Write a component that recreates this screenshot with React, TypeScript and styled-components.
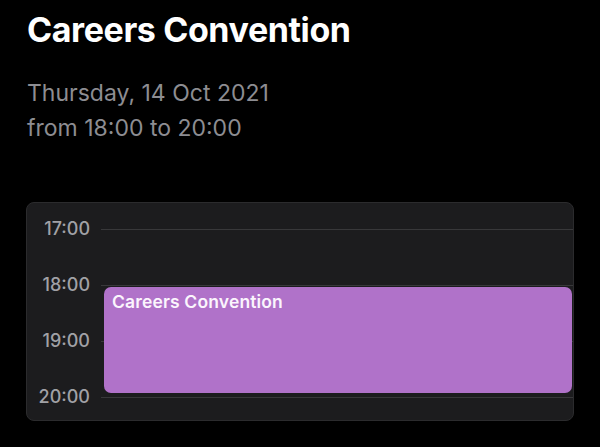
import styled, { createGlobalStyle } from "styled-components";

const GlobalStyle = createGlobalStyle`
  html, body {
    margin: 0;
    padding: 0;
    background: #000;
  }
  body {
    font-family: Inter, "Liberation Sans", Arial, sans-serif;
    -webkit-font-smoothing: antialiased;
  }
`;

const Page = styled.div`
  width: 600px;
  height: 447px;
  overflow: hidden;
  background: #000;
  padding: 10px 26px 0 26px;
  box-sizing: border-box;
`;

const Title = styled.h1`
  margin: 0 0 0 1px;
  font-size: 34px;
  line-height: 40px;
  font-weight: 700;
  color: #fff;
  letter-spacing: -0.4px;
`;

const Details = styled.div`
  margin: 26px 0 0 1px;
  color: #8d8d92;
  font-size: 23px;
  line-height: 35px;
`;

const Card = styled.div`
  margin-top: 56px;
  position: relative;
  background: #1c1c1e;
  border: 1px solid #2b2b2d;
  border-radius: 8px;
  padding: 16px 0 13px 0;
`;

const Hours = styled.div`
  display: flex;
  flex-direction: column;
`;

const HourRow = styled.div`
  display: flex;
  height: 56px;
  &:last-child {
    height: 20px;
  }
`;

const HourLabel = styled.div`
  width: 63px;
  flex: none;
  text-align: right;
  font-size: 18px;
  line-height: 20px;
  font-weight: 500;
  color: #a1a1a6;
`;

const HourLine = styled.div`
  flex: 1;
  margin-left: 11px;
  height: 10px;
  border-bottom: 1px solid #38383a;
`;

const EventBlock = styled.div<{ $top: number; $height: number }>`
  position: absolute;
  left: 77px;
  right: 1px;
  top: ${(p) => p.$top}px;
  height: ${(p) => p.$height}px;
  background: #b072c9;
  border-radius: 7px;
  padding: 4px 8px;
  box-sizing: border-box;
  color: #fbf5fd;
  font-size: 17.5px;
  line-height: 22px;
  font-weight: 600;
  letter-spacing: 0.15px;
`;

const hours = ["17:00", "18:00", "19:00", "20:00"];

export default function App() {
  return (
    <>
      <GlobalStyle />
      <Page>
        <Title>Careers Convention</Title>
        <Details>
          Thursday, 14 Oct 2021
          <br />
          from 18:00 to 20:00
        </Details>
        <Card>
          <Hours>
            {hours.map((h) => (
              <HourRow key={h}>
                <HourLabel>{h}</HourLabel>
                <HourLine />
              </HourRow>
            ))}
          </Hours>
          <EventBlock $top={84} $height={106}>
            Careers Convention
          </EventBlock>
        </Card>
      </Page>
    </>
  );
}
